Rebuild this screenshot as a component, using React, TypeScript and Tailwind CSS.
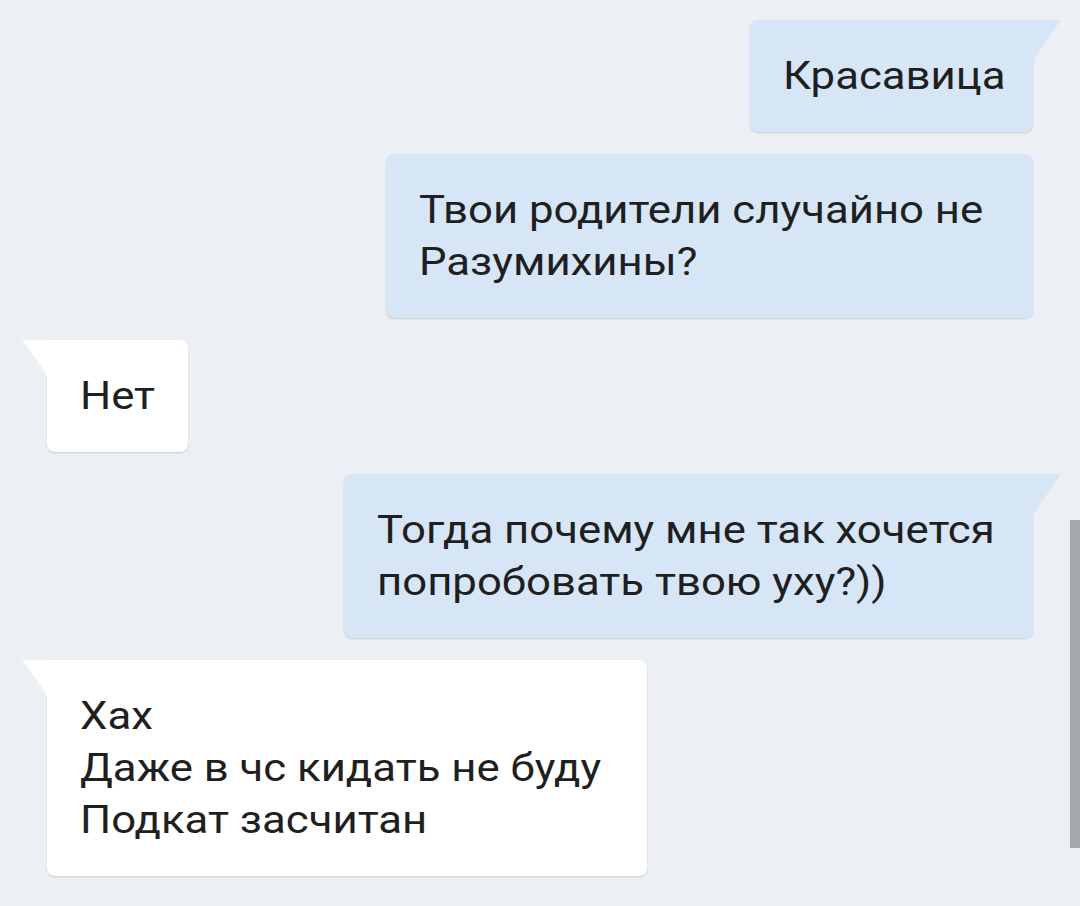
import React from 'react';

type Msg = { side: 'in' | 'out'; lines: string[]; width: string; tail?: boolean };

const messages: Msg[] = [
  { side: 'out', lines: ['Красавица'], width: 'w-[283px]', tail: true },
  { side: 'out', lines: ['Твои родители случайно не', 'Разумихины?'], width: 'w-[647px]' },
  { side: 'in', lines: ['Нет'], width: 'w-[141px]', tail: true },
  { side: 'out', lines: ['Тогда почему мне так хочется', 'попробовать твою уху?))'], width: 'w-[689px]', tail: true },
  { side: 'in', lines: ['Хах', 'Даже в чс кидать не буду', 'Подкат засчитан'], width: 'w-[600px]', tail: true },
];

const Bubble: React.FC<{ msg: Msg }> = ({ msg }) => {
  const out = msg.side === 'out';
  const corners = msg.tail
    ? out
      ? 'rounded-lg rounded-tr-none'
      : 'rounded-lg rounded-tl-none'
    : 'rounded-lg';
  return (
    <div
      className={`relative ${msg.width} ${corners} px-[33px] py-[30px] shadow-[0_1px_2px_rgba(0,0,0,0.14)] ${
        out ? 'bg-[#d7e6f7] self-end' : 'bg-white self-start'
      }`}
    >
      {msg.tail && out && (
        <svg className="absolute top-0 -right-[29px]" width="30" height="42" viewBox="0 0 30 42">
          <path d="M0 0 H29 L4 36 Q2 39 0 42 Z" fill="#d7e6f7" />
        </svg>
      )}
      {msg.tail && !out && (
        <svg className="absolute top-0 -left-[25px]" width="26" height="42" viewBox="0 0 26 42">
          <path d="M26 0 H0 L23 32 Q25 36 26 42 Z" fill="#ffffff" />
        </svg>
      )}
      <div className="origin-left scale-x-[1.15]">
        {msg.lines.map((l, i) => (
          <div key={i} className="whitespace-nowrap text-[38px] leading-[52px] text-[#1f1f1f]">
            {l}
          </div>
        ))}
      </div>
    </div>
  );
};

const App: React.FC = () => {
  return (
    <div
      className="relative w-[1080px] h-[906px] overflow-hidden bg-[#eceff3]"
      style={{ fontFamily: 'Roboto, "Noto Sans", sans-serif' }}
    >
      <div className="flex flex-col gap-[22px] px-[47px] pt-[20px]">
        {messages.map((m, i) => (
          <Bubble key={i} msg={m} />
        ))}
      </div>
      {/* scrollbar */}
      <div className="absolute right-0 top-[520px] w-[10px] h-[328px] bg-[#a6a9ad]" />
    </div>
  );
};

export default App;
